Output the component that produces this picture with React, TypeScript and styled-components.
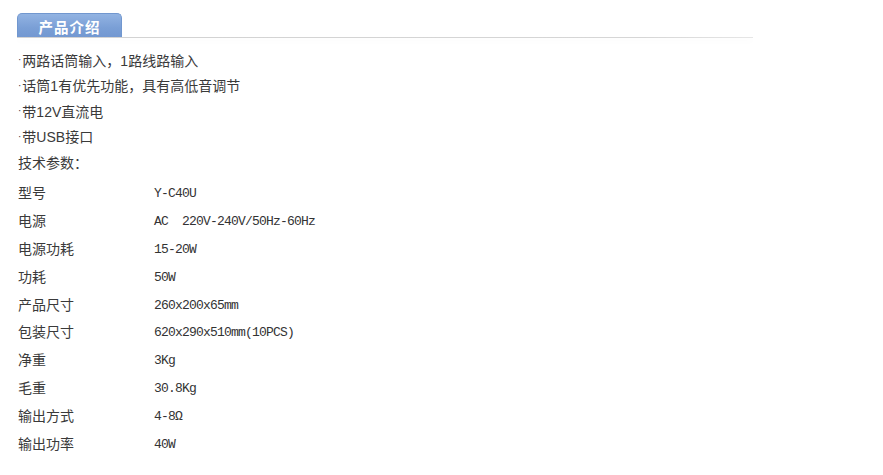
import styled, { createGlobalStyle } from 'styled-components';

const GlobalStyle = createGlobalStyle`
  body {
    margin: 0;
    background: #fff;
    font-family: 'Liberation Sans', 'Noto Sans CJK SC', sans-serif;
  }
`;

const Page = styled.div`
  padding: 13px 0 0 17px;
  color: #3a3a3a;
`;

const Header = styled.div`
  width: 736px;
  display: flex;
  flex-flow: column;
`;

const Tab = styled.div`
  width: 105px;
  height: 24px;
  box-sizing: border-box;
  border: 1px solid #7197cf;
  border-bottom: none;
  border-radius: 5px 5px 0 0;
  background: linear-gradient(#92b3e2, #7a9fd6 60%, #7398d1);
  color: #fff;
  font-family: 'Noto Sans CJK SC', sans-serif;
  font-weight: bold;
  font-size: 14.5px;
  line-height: 26px;
  text-align: center;
  letter-spacing: 1px;
`;

const Rule = styled.div`
  height: 1px;
  background: linear-gradient(to right, #d2d2d2, #d6d6d6 85%, #e6e6e6);
  box-shadow: 0 3px 5px rgba(0, 0, 0, 0.05);
`;

const Intro = styled.div`
  margin: 9px 0 0 1px;
  font-size: 14px;
`;

const Line = styled.div`
  height: 25.5px;
  display: flex;
  align-items: center;
  white-space: nowrap;
`;

const Dot = styled.span`
  font-size: 10px;
  margin-right: 1px;
`;

const Specs = styled.div`
  margin: 4px 0 0 1px;
  display: grid;
  grid-template-columns: 136px 1fr;
  grid-auto-rows: 27.8px;
  align-items: center;
`;

const Label = styled.div`
  font-family: 'Noto Sans CJK SC', sans-serif;
  font-size: 14px;
  line-height: 16px;
`;

const Value = styled.div`
  padding-top: 4px;
  font-family: 'Liberation Mono', monospace;
  font-size: 13px;
  letter-spacing: -0.8px;
  line-height: 16px;
  white-space: pre;
  color: #333;
`;

const intro = [
  '两路话筒输入，1路线路输入',
  '话筒1有优先功能，具有高低音调节',
  '带12V直流电',
  '带USB接口',
];

const specs: [string, string][] = [
  ['型号', 'Y-C40U'],
  ['电源', 'AC  220V-240V/50Hz-60Hz'],
  ['电源功耗', '15-20W'],
  ['功耗', '50W'],
  ['产品尺寸', '260x200x65mm'],
  ['包装尺寸', '620x290x510mm(10PCS)'],
  ['净重', '3Kg'],
  ['毛重', '30.8Kg'],
  ['输出方式', '4-8Ω'],
  ['输出功率', '40W'],
];

export default function App() {
  return (
    <Page>
      <GlobalStyle />
      <Header>
        <Tab>产品介绍</Tab>
        <Rule />
      </Header>
      <Intro>
        {intro.map((t) => (
          <Line key={t}>
            <Dot>·</Dot>
            {t}
          </Line>
        ))}
        <Line>技术参数：</Line>
      </Intro>
      <Specs>
        {specs.map(([k, v]) => (
          <>
            <Label key={k}>{k}</Label>
            <Value key={k + 'v'}>{v}</Value>
          </>
        ))}
      </Specs>
    </Page>
  );
}
